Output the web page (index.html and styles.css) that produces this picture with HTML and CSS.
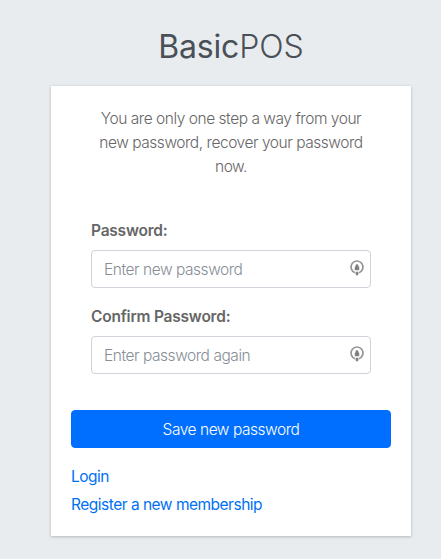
FILE: index.html
```html
<!DOCTYPE html>
<html lang="en">
<head>
<meta charset="utf-8">
<title>BasicPOS</title>
<link rel="stylesheet" href="styles.css">
</head>
<body>
<main class="box">
  <h1 class="logo"><b>Basic</b>POS</h1>
  <section class="card">
    <p class="msg">You are only one step a way from your new password, recover your password now.</p>
    <form class="fields">
      <div class="field">
        <label class="label" for="p1">Password:</label>
        <div class="control">
          <input class="input" id="p1" type="password" placeholder="Enter new password">
          <svg class="icon" viewBox="0 0 16 16" aria-hidden="true"><path class="ring" d="M6.2 12.7A6 6 0 1 1 9.8 12.7"/><path class="lock" d="M6 6.8h4v3.2H6zM6.8 6.8V5.6a1.2 1.2 0 0 1 2.4 0v1.2"/><path class="arrow" d="M6.9 11.8h2.2v1.6h1L8 15.8l-2.100-2.400h1z"/></svg>
        </div>
      </div>
      <div class="field">
        <label class="label" for="p2">Confirm Password:</label>
        <div class="control">
          <input class="input" id="p2" type="password" placeholder="Enter password again">
          <svg class="icon" viewBox="0 0 16 16" aria-hidden="true"><path class="ring" d="M6.2 12.7A6 6 0 1 1 9.8 12.7"/><path class="lock" d="M6 6.8h4v3.2H6zM6.8 6.8V5.6a1.2 1.2 0 0 1 2.4 0v1.2"/><path class="arrow" d="M6.9 11.8h2.2v1.6h1L8 15.8l-2.100-2.400h1z"/></svg>
        </div>
      </div>
    </form>
    <button class="btn" type="button">Save new password</button>
    <nav class="links">
      <a href="#">Login</a>
      <a href="#">Register a new membership</a>
    </nav>
  </section>
</main>
</body>
</html>
```

FILE: styles.css
```css
* { box-sizing: border-box; }
html, body { height: 100%; }
body {
  margin: 0;
  background: #e9ecef;
  font-family: "Inter", "Liberation Sans", sans-serif;
  font-size: 15.5px;
  line-height: 24px;
  letter-spacing: -0.46px;
  color: #495057;
  overflow: hidden;
}
.box { width: 360px; margin-left: 51px; }
.logo {
  margin: 0;
  height: 86px;
  padding-top: 25px;
  text-align: center;
  font-size: 32px;
  line-height: 44px;
  font-weight: 300;
  letter-spacing: 0;
  color: #495057;
}
.logo b { font-weight: 400; letter-spacing: -0.2px; }
.card {
  height: 450px;
  padding: 21px 20px 20px;
  background: #fff;
  box-shadow: 0 0 1px rgba(0,0,0,.125), 0 1px 3px rgba(0,0,0,.2);
}
.msg {
  margin: 0 0 40px;
  padding: 0 20px;
  text-align: center;
  font-weight: 300;
  color: #666;
}
.fields { padding: 0 20px; display: flex; flex-direction: column; gap: 17px; }
.label {
  display: block;
  margin-bottom: 7px;
  font-weight: 600;
  letter-spacing: -0.22px;
  color: #666;
}
.control { position: relative; }
.input {
  display: block;
  width: 100%;
  height: 38px;
  padding: 6px 12px;
  border: 1px solid #ced4da;
  border-radius: 4px;
  background: #fff;
  font: 300 15.5px/24px "Inter", "Liberation Sans", sans-serif;
  letter-spacing: -0.46px;
}
.input::placeholder { color: #868e96; opacity: 1; }
.icon {
  position: absolute;
  right: 6px;
  top: 10px;
  width: 16px;
  height: 16px;
}
.ring { fill: none; stroke: #969696; stroke-width: 1.7; }
.lock { fill: #808080; stroke: #808080; stroke-width: .5; }
.arrow { fill: #808080; }
.btn {
  display: block;
  width: 100%;
  height: 38px;
  margin-top: 36px;
  padding: 1px 0 0;
  border: 1px solid #006fff;
  border-radius: 4px;
  background: #006fff;
  color: #fff;
  font: 300 15.5px/24px "Inter", "Liberation Sans", sans-serif;
  letter-spacing: -0.46px;
}
.links { margin-top: 17px; display: flex; flex-direction: column; gap: 4px; align-items: flex-start; }
.links a { color: #0070f5; text-decoration: none; font-weight: 400; letter-spacing: -0.5px; }
```
